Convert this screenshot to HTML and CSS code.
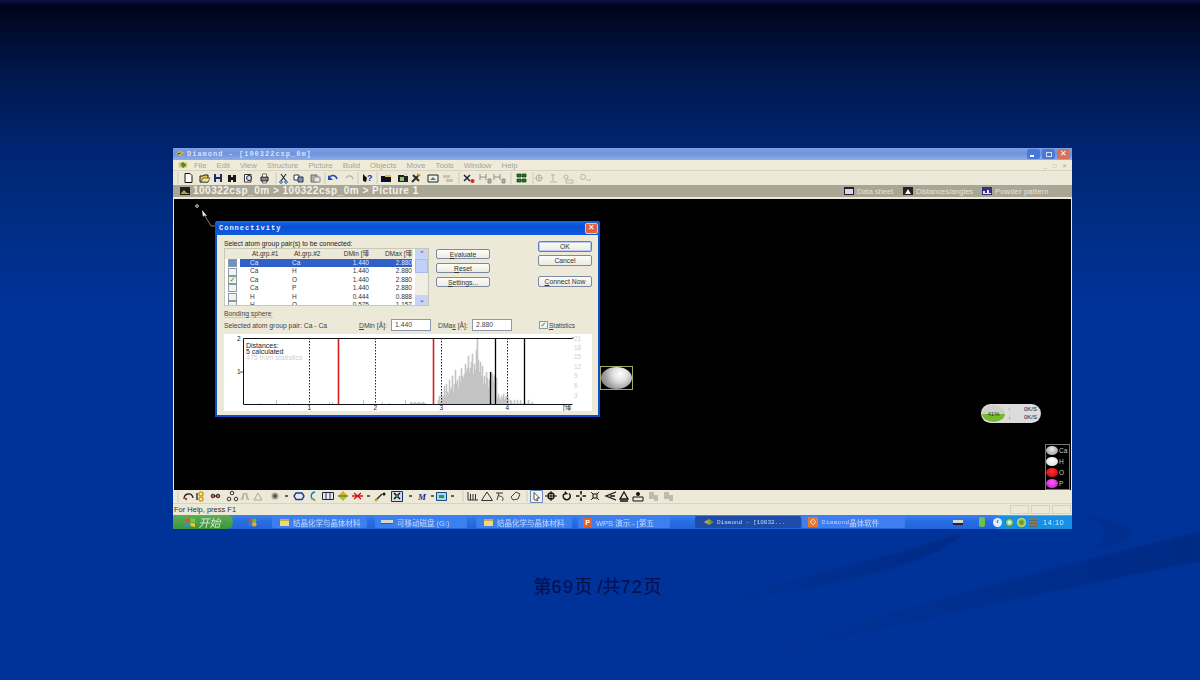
FILE: index.html
```html
<!DOCTYPE html>
<html lang="zh">
<head>
<meta charset="utf-8">
<title>Diamond - Connectivity</title>
<link rel="stylesheet" href="styles.css">
</head>
<body>
<svg class="swoosh" viewBox="0 0 1200 680" aria-hidden="true">
  <defs>
    <linearGradient id="fadeA" x1="1" y1="0" x2="0" y2="0"><stop offset="0" stop-color="#002a84"/><stop offset=".5" stop-color="#002f90"/><stop offset="1" stop-color="#003399"/></linearGradient>
  </defs>
  <path fill="url(#fadeA)" d="M1200 532V561C1060 590 880 625 715 672C850 620 1040 570 1200 532Z"/>
  <path fill="url(#fadeA)" d="M962 534C930 570 800 590 680 612C780 580 880 560 962 534Z"/>
  <path class="sw" d="M1075 515C1110 518 1133 525 1132 533C1130 542 1110 548 1090 551C1110 540 1115 525 1075 515Z"/>
</svg>
<main class="slide">
  <section class="window">
    <header class="titlebar">
      <svg class="ticon" viewBox="0 0 10 8"><path d="M0 4L5 1L10 3L6 4L8 7L4 5Z" fill="#c9c24a"/><path d="M2 4L6 3" stroke="#444"/></svg>
      <span class="mono title-text">Diamond - [100322csp_0m]</span>
      <span class="winbtns">
        <span class="wb wb-blue"><i class="wb-min"></i></span>
        <span class="wb wb-blue"><i class="wb-max"></i></span>
        <span class="wb wb-red">✕</span>
      </span>
    </header>
    <nav class="menubar">
      <svg class="menuicon" viewBox="0 0 12 10"><path d="M1 2H11V8H1Z" fill="#d8c84a"/><path d="M3 4L6 1L10 5L6 9Z" fill="#4c8a3a"/></svg>
      <span>File</span><span>Edit</span><span>View</span><span>Structure</span><span>Picture</span><span>Build</span><span>Objects</span><span>Move</span><span>Tools</span><span>Window</span><span>Help</span>
      <span class="mdi">_ &#9633; ✕</span>
    </nav>
    <div class="toolbar">
      <svg class="strip" viewBox="173 171 899 14" aria-hidden="true">
        <path d="M178 172V184" stroke="#cfcbb8"/>
        <path d="M185 173.500H190L192 175.500V182.500H185Z" fill="#fff" stroke="#111"/>
        <path d="M200 176H203L204 175H208V182H200Z" fill="#e8c850" stroke="#222"/><path d="M203 178H210L208 182H201Z" fill="#f6e48c" stroke="#222" stroke-width=".6"/>
        <path d="M214 174H222V182H214Z" fill="#222b55"/><path d="M216 174H220V177H216ZM216 179H220V182H216Z" fill="#dfe0ee"/>
        <path d="M228 175H231V182H228ZM233 175H236V182H233ZM231 177H233V180H231Z" fill="#17171a"/>
        <path d="M244.500 174.500H251V182H244.500Z" fill="#fff" stroke="#333"/><circle cx="249" cy="178" r="2.500" fill="#cfe4f6" stroke="#222"/>
        <path d="M261 177H268V181H261Z" fill="#8a8a88" stroke="#222"/><path d="M262.500 174H266.500V177H262.500ZM262.500 181H266.500V183H262.500Z" fill="#fff" stroke="#333" stroke-width=".7"/>
        <path d="M276 172V184" stroke="#cfcbb8"/>
        <path d="M281 174L286 181M286 174L281 181" stroke="#222" stroke-width="1.100"/><circle cx="281" cy="182" r="1.300" fill="none" stroke="#26a"/><circle cx="286" cy="182" r="1.300" fill="none" stroke="#26a"/>
        <path d="M294 175H299V180H294Z" fill="#fff" stroke="#334"/><path d="M298 177H303V182H298Z" fill="#7e8ec4" stroke="#334"/>
        <path d="M311 175H317V182H311Z" fill="#b9b39a" stroke="#667"/><path d="M314 177H320V182H314Z" fill="#e6e4dc" stroke="#889"/>
        <path d="M325 172V184" stroke="#cfcbb8"/>
        <path d="M329 178C331 174 336 175 337 179" fill="none" stroke="#2548b8" stroke-width="1.500"/><path d="M328 175V180H333Z" fill="#2548b8"/>
        <path d="M346 178C348 175 352 175 353 179" fill="none" stroke="#b6b4a6" stroke-width="1.200"/>
        <path d="M358 172V184" stroke="#cfcbb8"/>
        <path d="M363 174L367 178L366 182L363 181Z" fill="#111"/><text class="svgq" x="367" y="181">?</text>
        <path d="M377 172V184" stroke="#cfcbb8"/>
        <path d="M381 176H391V182H381Z" fill="#0d0f2a"/><path d="M385 175H391V177H385Z" fill="#e4c23c"/>
        <path d="M398 175H408V182H398Z" fill="#242424"/><path d="M400 177H404V181H400Z" fill="#8cc46c"/><path d="M404 173H408V176H404Z" fill="#ddd"/>
        <path d="M412 182L419 175M413 175L419 181" stroke="#2d2d2d" stroke-width="2"/><path d="M417 173L421 175L418 177Z" fill="#d08f30"/>
        <path d="M428 175H438V182H428Z" fill="#f4f0dc" stroke="#222"/><path d="M430 180L433 177L436 180Z" fill="#4a7cc0"/>
        <path d="M443 175H450V178H443ZM446 179H453V182H446Z" fill="#c6c3b1"/>
        <path d="M459 172V184" stroke="#cfcbb8"/>
        <path d="M464 175L470 181M470 175L464 181" stroke="#222233" stroke-width="1.500"/><circle cx="472.500" cy="181" r="2" fill="#e02418"/>
        <path d="M480 174V180M486 174V180M480 177H486M488 179H491V183H488Z" stroke="#8f9288" fill="#a8b0a0"/>
        <path d="M494 174V180M500 174V180M494 177H500M502 179H505V183H502Z" stroke="#8f9288" fill="#a8b0a0"/>
        <path d="M511 172V184" stroke="#cfcbb8"/>
        <path d="M517 174H521V177H517ZM522 174H526V177H522ZM517 179H521V182H517ZM522 179H526V182H522Z" fill="#1e7a22" stroke="#10360f" stroke-width=".7"/>
        <path d="M533 172V184" stroke="#cfcbb8"/>
        <g fill="none" stroke="#b8b5a2"><circle cx="539" cy="178" r="3"/><path d="M535 178H543M539 174V182"/><path d="M551 175L555 175M553 174V181M550 182H557"/><circle cx="566" cy="177" r="2"/><path d="M566 180H573V183H566Z"/><circle cx="583" cy="177" r="2.500"/><path d="M586 180H591"/></g>
      </svg>
    </div>
    <div class="picbar">
      <svg class="picicon" viewBox="0 0 10 8"><path d="M0 0H10V8H0Z" fill="#1e1e1e"/><path d="M1 6L4 3L7 6H9V7H1Z" fill="#a8a832"/></svg>
      <span class="crumb">100322csp_0m &gt; 100322csp_0m &gt; Picture 1</span>
      <span class="tab tab-data"><svg viewBox="0 0 10 8"><path d="M0 0H10V8H0Z" fill="#222"/><path d="M1 2H9V7H1Z" fill="#d8d4f0"/></svg>Data sheet</span>
      <span class="tab tab-dist"><svg viewBox="0 0 10 8"><path d="M0 0H10V8H0Z" fill="#222"/><path d="M2 7L5 2L8 7Z" fill="#f0f0f0"/></svg>Distances/angles</span>
      <span class="tab tab-powder"><svg viewBox="0 0 10 8"><path d="M0 0H10V8H0Z" fill="#34307a"/><path d="M1 7V4H3V6H5V3H7V6H9V7Z" fill="#e6e4fa"/></svg>Powder pattern</span>
    </div>
    <div class="picsep"></div>
    <div class="canvas">
      <svg class="pointer" viewBox="0 0 42 40" aria-hidden="true">
        <circle cx="23" cy="7" r="1.300" fill="none" stroke="#ddd"/>
        <path d="M28 11L33 17L30 16.500L29 18Z" fill="#f0f0f0"/>
        <path d="M31 17L37 27H42" fill="none" stroke="#8a7468"/>
      </svg>
      <div class="atom"><span class="ball"></span></div>
      <div class="netwidget">
        <span class="gauge">41%</span>
        <span class="rates"><span><b class="up">↑</b>0K/S</span><span><b class="down">↓</b>0K/S</span></span>
      </div>
      <ul class="legend">
        <li><i class="ball-ca"></i>Ca</li>
        <li><i class="ball-h"></i>H</li>
        <li><i class="ball-o"></i>O</li>
        <li><i class="ball-p"></i>P</li>
      </ul>
    </div>
    <div class="toolbar toolbar-b">
      <svg class="strip" viewBox="173 490 899 13" aria-hidden="true">
        <path d="M178 491V502" stroke="#cfcbb8"/>
        <path d="M184 499C184 493 192 492 193 498" fill="none" stroke="#222" stroke-width="1.300"/><circle cx="186" cy="499" r="1.200" fill="#d03020"/>
        <circle cx="201" cy="494" r="2" fill="none" stroke="#d8a010" stroke-width="1.500"/><circle cx="201" cy="499" r="2" fill="none" stroke="#d8a010" stroke-width="1.500"/><path d="M197 493V500" stroke="#222" stroke-width="1.300"/>
        <path d="M211 496H219" stroke="#c02818" stroke-width="1.300"/><circle cx="213" cy="496" r="1.800" fill="none" stroke="#222"/><circle cx="218" cy="496" r="1.800" fill="none" stroke="#222"/>
        <circle cx="232" cy="493" r="1.800" fill="none" stroke="#333"/><circle cx="229" cy="499" r="1.800" fill="none" stroke="#333"/><circle cx="236" cy="499" r="1.800" fill="none" stroke="#333"/>
        <g fill="none" stroke="#aaa998"><path d="M241 500L245 493L249 500M243 493V500M247 493V500"/><path d="M254 500L258 493L262 500Z"/></g>
        <circle cx="275" cy="496" r="3.500" fill="#a8a595"/><circle cx="275" cy="496" r="1.800" fill="#47503e"/>
        <path d="M285 496H288" stroke="#333" stroke-width="1.500"/>
        <path d="M296 493H302L304 496L302 499.500H296L294 496Z" fill="none" stroke="#1838a8" stroke-width="1.400"/>
        <path d="M315 492C310 493 310 499 315 500" fill="none" stroke="#1a7ab8" stroke-width="1.400"/><path d="M311 499L316 501" stroke="#c6b830"/>
        <path d="M322.500 492.500H333.500V499.500H322.500Z" fill="#e8ecf4" stroke="#222"/><path d="M326 492.500V499.500M330 492.500V499.500" stroke="#226"/>
        <path d="M343 491L348 496L343 501L338 496Z" fill="#d6ae20"/><path d="M338 496H348" stroke="#1e8830"/>
        <path d="M354 493L361 499M361 493L354 499M352 496H363" stroke="#d01818" stroke-width="1.400"/>
        <path d="M367 496H370" stroke="#333" stroke-width="1.500"/>
        <path d="M376 500L382 494" stroke="#222" stroke-width="1.300"/><circle cx="376" cy="500" r="1.500" fill="#d8a010"/><circle cx="384" cy="494" r="1.500" fill="#111"/>
        <path d="M391.500 491.500H402.500V501.500H391.500Z" fill="#d6dcec" stroke="#1a2a6a"/><path d="M394 493L400 499M400 493L394 499" stroke="#111" stroke-width="1.600"/><circle cx="397" cy="496" r="1.300" fill="#2a8a2a"/>
        <path d="M409 496H412" stroke="#333" stroke-width="1.500"/>
        <text class="svgm" x="418" y="499.500">M</text><path d="M431 496H434" stroke="#333" stroke-width="1.500"/>
        <path d="M436.500 492.500H446.500V500.500H436.500Z" fill="#a8d8e0" stroke="#1a4a8a"/><path d="M439 495H444V498H439Z" fill="#2a9a50"/>
        <path d="M451 496H454" stroke="#333" stroke-width="1.500"/>
        <path d="M463 491V502" stroke="#cfcbb8"/>
        <path d="M468 492V500H478M470.500 494V500M473 494V500M475.500 494V500" fill="none" stroke="#333"/>
        <path d="M487 492L492.500 500.500H481.500Z" fill="none" stroke="#333"/>
        <path d="M496 493H503M499 493L497 500M499 496C503 496 504 499 502 501" fill="none" stroke="#333"/>
        <path d="M511 497L516 492L520 494L518 499L513 500Z" fill="none" stroke="#444"/>
        <path d="M527 491V502" stroke="#cfcbb8"/>
        <path d="M530.500 490.500H542.500V502.500H530.500Z" fill="#f6f4e8" stroke="#6888c0"/><path d="M534 492.500L539.500 498L536.800 498.200L537.800 500.800L534 499.500Z" fill="#fff" stroke="#222" stroke-width=".8"/>
        <circle cx="551" cy="496" r="3" fill="none" stroke="#111" stroke-width="1.400"/><path d="M545 496H557M551 491V501" stroke="#111"/>
        <path d="M569 493.500A3.500 3.500 0 1 1 564 494" fill="none" stroke="#111" stroke-width="1.500"/><path d="M565 491L568 494L564 495Z" fill="#111"/>
        <path d="M581 491V501M576 496H586" stroke="#111" stroke-width="1.600"/><circle cx="581" cy="496" r="1.700" fill="#e4e0cc"/>
        <path d="M591 492L599 500M599 492L591 500" stroke="#222"/><path d="M593 494H597V498H593Z" fill="#e4e0cc" stroke="#111"/>
        <path d="M616 492L606 496L616 500M610 496H615" fill="none" stroke="#111" stroke-width="1.300"/>
        <path d="M624 492L620 499H628ZM620 501H628" fill="none" stroke="#111" stroke-width="1.300"/>
        <circle cx="638" cy="494" r="2" fill="#111"/><path d="M633 497H643V501H633Z" fill="none" stroke="#111"/>
        <path d="M649 492H654V499H649ZM654 495H658V501H654Z" fill="#bdbbab"/>
        <path d="M664 492H669V499H664ZM669 495H673V501H669Z" fill="#bdbbab"/>
      </svg>
    </div>
    <div class="status">
      <span class="status-text">For Help, press F1</span>
      <span class="pane"></span><span class="pane"></span><span class="pane"></span>
    </div>
    <footer class="taskbar">
      <span class="start"><svg viewBox="0 0 10 10"><path d="M0 1L4 0V4L0 5Z" fill="#e8542a"/><path d="M5 0L10 1V5L5 4Z" fill="#7cc83c"/><path d="M0 6L4 5V9L0 10Z" fill="#3c88e0"/><path d="M5 5L10 6V10L5 9Z" fill="#f0c828"/></svg><em>开始</em></span>
      <span class="quick"><svg viewBox="0 0 10 10"><circle cx="3" cy="3" r="2.500" fill="#d04c30"/><circle cx="7" cy="3" r="2.500" fill="#68b848"/><circle cx="3" cy="7" r="2.500" fill="#3c78d8"/><circle cx="7" cy="7" r="2.500" fill="#e0b030"/></svg></span>
      <span class="task t1"><i class="folder"></i>结晶化学与晶体材料</span>
      <span class="task t2"><i class="drive"></i>可移动磁盘 (G:)</span>
      <span class="task t3"><i class="folder"></i>结晶化学与晶体材料</span>
      <span class="task t4"><i class="wps">P</i>WPS 演示 - [第五</span>
      <span class="task t5 active"><i class="dia"></i><span class="mono">Diamond - [10032...</span></span>
      <span class="task t6"><i class="orange">◇</i><span class="mono">Diamond</span>晶体软件</span>
      <span class="tray-left">
        <i class="tl-a"></i><i class="tl-b"></i>
      </span>
      <span class="tray">
        <i class="arrow-round">‹</i><i class="tr-g"></i><i class="tr-s"></i><i class="tr-n"></i>
        <span class="clock">14:10</span>
      </span>
    </footer>

    <div class="dialog">
      <header class="dlg-title">
        <span class="mono dlg-name">Connectivity</span>
        <span class="wb wb-red dlg-close">✕</span>
      </header>
      <div class="dlg-body">
        <div class="dlg-top">
          <div class="listcol">
            <div class="lbl">Select atom group pair(s) to be connected:</div>
            <div class="list">
              <div class="rows">
                <div class="row head"><span></span><span class="c1">At.grp.#1</span><span class="c2">At.grp.#2</span><span class="num">DMin [琫</span><span class="num">DMax [琫</span></div>
                <div class="row sel"><span class="cell-check"><i class="cb cb-fill"></i></span><span class="c1 sel-on">Ca</span><span class="c2 sel-on">Ca</span><span class="num sel-on">1.440</span><span class="num sel-on">2.880</span></div>
                <div class="row"><span class="cell-check"><i class="cb"></i></span><span class="c1">Ca</span><span class="c2">H</span><span class="num">1.440</span><span class="num">2.880</span></div>
                <div class="row"><span class="cell-check"><i class="cb cb-on">✓</i></span><span class="c1">Ca</span><span class="c2">O</span><span class="num">1.440</span><span class="num">2.880</span></div>
                <div class="row"><span class="cell-check"><i class="cb"></i></span><span class="c1">Ca</span><span class="c2">P</span><span class="num">1.440</span><span class="num">2.880</span></div>
                <div class="row"><span class="cell-check"><i class="cb"></i></span><span class="c1">H</span><span class="c2">H</span><span class="num">0.444</span><span class="num">0.888</span></div>
                <div class="row"><span class="cell-check"><i class="cb"></i></span><span class="c1">H</span><span class="c2">O</span><span class="num">0.575</span><span class="num">1.157</span></div>
              </div>
              <div class="scroll">
                <span class="sb-btn">⌃</span><span class="sb-thumb"></span><span class="sb-gap"></span><span class="sb-btn">⌄</span>
              </div>
            </div>
          </div>
          <div class="btncol b1">
            <span class="btn"><u>E</u>valuate</span>
            <span class="btn"><u>R</u>eset</span>
            <span class="btn"><u>S</u>ettings...</span>
          </div>
          <div class="btncol b2">
            <span class="btn big default">OK</span>
            <span class="btn big">Cancel</span>
            <span class="btn big connect"><u>C</u>onnect Now</span>
          </div>
        </div>
        <div class="bond"><span>Bonding sphere</span></div>
        <div class="bondrow">
          <span class="sel-pair">Selected atom group pair: Ca - Ca</span>
          <span class="fl fl-min"><u>D</u>Min [Å]:</span><span class="input">1.440</span>
          <span class="fl fl-max">DMa<u>x</u> [Å]:</span><span class="input">2.880</span>
          <span class="stat"><i class="cb cb-on">✓</i><span><u>S</u>tatistics</span></span>
        </div>
        <svg class="chart" viewBox="224 334 368 77" role="img" aria-label="Distance histogram">
          <rect x="224" y="334" width="368" height="77" fill="#fff"/>
          <path class="bars" d="M438 404V400h1V396h1V402h1V392h1V398h1V396h1V386h1V396h1V384h1V392h1V394h1V380h1V390h1V388h1V376h1V392h1V384h1V370h1V384h1V380h1V388h1V376h1V382h1V368h1V376h1V378h1V374h1V364h1V372h1V368h1V356h1V372h1V368h1V362h1V354h1V374h1V364h1V370h1V350h1V338h1V360h1V372h1V362h1V376h1V366h1V384h1V376h1V384h1V372h1V378h1V388h1V380h1V388h1V372h1V374h1V382h1V376h1V388h1V378h1V398h1V394h1V398h1V400h1V396h1V398h1V394h1V400h1V397h1V396h1V393h1V399h1V404h1V400h1V401h1V404h2V400h1V404h2V400h1V404h2V400h1V404h3V402h1V404h3V400h1V404h3V402h1V404Z"/>
          <path class="bars thin" d="M259 404V403h1V404ZM276 404V400h1V404ZM288 404V403h1V404ZM329 404V402h1V404ZM332 404V402h1V404ZM363 404V400h1V404ZM382 404V402h1V404ZM389 404V403h1V404ZM405 404V400h1V404ZM410 404V402h2V403h2V402h2V403h2V402h2V403h2V402h2V403h2V404Z"/>
          <g class="dots"><path d="M309.500 338V404M375.500 338V404M441.500 338V404M507.500 338V404"/></g>
          <path class="red" d="M338.500 338V404M433.500 338V404"/>
          <path class="blk" d="M490.500 372V404M495.500 338V404M524.500 338V404"/>
          <path class="axis" d="M243.500 338.500H572.500M243.500 338.500V404.500H572.500"/>
          <path class="tick" d="M240 372H243M572 338H574"/>
          <text class="t" x="237" y="341">2</text><text class="t" x="237" y="374">1</text>
          <text class="t" x="307.500" y="410">1</text><text class="t" x="373.500" y="410">2</text><text class="t" x="439.500" y="410">3</text><text class="t" x="505.500" y="410">4</text><text class="t" x="563" y="410">[琫</text>
          <text class="t lg" x="246" y="347.500">Distances:</text><text class="t lg" x="246" y="353.500">5 calculated</text><text class="t lg gr" x="246" y="360">475 from statistics</text>
          <g class="gr t"><text x="574" y="341">21</text><text x="574" y="350">18</text><text x="574" y="359">15</text><text x="574" y="369">12</text><text x="574" y="378">9</text><text x="574" y="388">6</text><text x="574" y="398">3</text></g>
        </svg>
      </div>
    </div>
  </section>
  <p class="pager">第<span class="dg">69</span>页 /共<span class="dg">72</span>页</p>
</main>
</body>
</html>
```

FILE: styles.css
```css
* { box-sizing: border-box; }
html, body { margin: 0; height: 680px; overflow: hidden; }
body {
  position: relative;
  width: 1200px;
  font-family: "Liberation Sans", "Noto Sans CJK SC", sans-serif;
  background: linear-gradient(180deg, #0a1244 0, #00041a 6px, #000a2a 25px, #00184c 75px, #002470 145px, #002d84 220px, #003399 310px, #003399 680px);
}
.swoosh { position: absolute; inset: 0; width: 1200px; height: 680px; filter: blur(1.5px); }
.sw { fill: #002f90; }
.slide { position: relative; display: flex; flex-direction: column; padding-top: 148px; }
.mono { font-family: "Liberation Mono", "Noto Sans CJK SC", monospace; font-weight: 700; letter-spacing: 1px; }

/* window */
.window {
  position: relative;
  margin-left: 173px;
  width: 899px;
  height: 381px;
  display: flex;
  flex-direction: column;
  background: #ece9d8;
  filter: blur(.5px);
}
.titlebar {
  height: 12px;
  display: flex;
  align-items: center;
  padding: 0 2px 0 2px;
  background: linear-gradient(180deg, #7fa0e2, #6f92dc 50%, #8eade8);
}
.ticon { width: 10px; height: 8px; margin-right: 2px; }
.title-text { font-size: 7px; color: #d8e2fc; }
.winbtns { margin-left: auto; display: flex; gap: 2px; }
.wb { width: 13px; height: 10px; border-radius: 2px; display: flex; align-items: center; justify-content: center; color: #fff; font-size: 8px; position: relative; line-height: 1; }
.wb-blue { background: #4a78d8; }
.wb-red { background: #d8705c; }
.wb-min { width: 4px; height: 2px; background: #fff; position: absolute; left: 3px; bottom: 2px; }
.wb-max { width: 6px; height: 5px; border: 1px solid #dde; }

.menubar {
  height: 11px;
  display: flex;
  align-items: center;
  gap: 10px;
  padding-left: 21px;
  font-size: 7.8px;
  color: #a5a396;
  background: #efebd9;
  border-bottom: 1px solid #dcd2c4;
  position: relative;
}
.menuicon { position: absolute; left: 5px; top: 0; width: 10px; height: 10px; }
.mdi { margin-left: auto; margin-right: 3px; font-size: 6px; color: #b0aea2; letter-spacing: 2px; }
.toolbar { height: 14px; background: #ece9d8; flex: none; }
.toolbar-b { height: 13px; }
.strip { display: block; width: 899px; height: 100%; }
.svgq { font: 700 9px "Liberation Sans", sans-serif; fill: #1a2a9a; }
.svgm { font: italic 700 9px "Liberation Serif", serif; fill: #1a2a9a; }

.picbar {
  height: 12px;
  display: flex;
  align-items: center;
  padding: 0 19px 0 7px;
  background: #a9a696;
  color: #f2f2ea;
  font-size: 8px;
}
.picicon { width: 10px; height: 8px; margin-right: 3px; }
.crumb { font-size: 10px; letter-spacing: .5px; line-height: 12px; font-weight: 700; white-space: nowrap; }
.tab { display: flex; align-items: center; gap: 3px; font-size: 7.5px; color: #e4e3da; white-space: nowrap; }
.tab svg { width: 10px; height: 8px; }
.tab-data { margin-left: auto; width: 59px; }
.tab-dist { width: 79px; }
.tab-powder { width: 71px; letter-spacing: .2px; }
.picsep { height: 2px; background: #ece9d8; }

/* canvas */
.canvas { flex: 1; position: relative; background: #000; margin: 0 1px; }
.pointer { position: absolute; left: 0; top: 0; width: 42px; height: 40px; }
.atom { position: absolute; left: 426px; top: 167px; width: 33px; height: 24px; border: 1px solid #a6a860; display: flex; }
.ball { flex: 1; border-radius: 50%; background: radial-gradient(circle at 62% 32%, #fff, #e0e0e0 30%, #a0a0a0 62%, #6e6e6e); }
.netwidget {
  position: absolute;
  left: 807px;
  top: 205px;
  width: 60px;
  height: 19px;
  border-radius: 10px;
  background: #dcdcdc;
  display: flex;
  align-items: center;
  padding: 0 4px 0 1px;
  font-size: 6px;
  color: #222;
}
.gauge { width: 23px; height: 17px; border-radius: 50%; display: flex; align-items: center; justify-content: center; background: linear-gradient(180deg, #cfcfc8 55%, #76b82e 55%); color: #333; }
.rates { flex: 1; display: flex; flex-direction: column; gap: 1px; }
.rates span { display: flex; justify-content: space-between; padding-left: 3px; line-height: 7px; }
.up { color: #e07020; }
.down { color: #408030; }
.legend {
  position: absolute;
  right: 1px;
  bottom: 0;
  width: 25px;
  height: 46px;
  margin: 0;
  padding: 0;
  list-style: none;
  display: flex;
  flex-direction: column;
  justify-content: space-around;
  background: #000;
  border: 1px solid #77776e;
  color: #c8c8c8;
  font-size: 6.5px;
}
.legend li { display: flex; align-items: center; gap: 1px; height: 11px; }
.legend i { width: 12px; height: 9px; border-radius: 50%; display: block; }
.ball-ca { background: radial-gradient(circle at 50% 35%, #eee, #8c8c8c); }
.ball-h { background: radial-gradient(circle at 50% 35%, #fff, #d8d8d8); }
.ball-o { background: radial-gradient(circle at 50% 35%, #ff3030, #c80000); }
.ball-p { background: radial-gradient(circle at 50% 35%, #ff60ff, #c010c0); }

/* status */
.status {
  height: 12px;
  display: flex;
  align-items: center;
  gap: 2px;
  padding-right: 1px;
  background: #ece9d8;
  border-top: 1px solid #d8d4c0;
  font-size: 7.5px;
  color: #333;
}
.status-text { margin-left: 1px; margin-right: auto; }
.pane { width: 19px; height: 9px; border: 1px solid #d6d2bc; }

/* taskbar */
.taskbar {
  height: 14px;
  flex: none;
  display: flex;
  align-items: stretch;
  background: linear-gradient(180deg, #3a84f0, #2a6ee4 40%, #2264d8);
  font-size: 7.5px;
  color: #c6d6fa;
  white-space: nowrap;
}
.start {
  width: 60px;
  display: flex;
  align-items: center;
  justify-content: center;
  gap: 4px;
  background: linear-gradient(180deg, #5cad58, #3b963c);
  border-radius: 0 6px 6px 0;
  color: #d4e8d0;
  font-size: 11px;
}
.start svg { width: 9px; height: 9px; }
.start em { font-family: "Noto Sans CJK SC", sans-serif; line-height: 1; }
.quick { width: 39px; display: flex; align-items: center; padding-left: 15px; }
.quick svg { width: 9px; height: 9px; }
.task { display: flex; align-items: center; gap: 4px; padding-left: 6px; margin: 1px 0; background: #3c80f0; border-radius: 2px; overflow: hidden; }
.t1 { width: 95px; padding-left: 8px; }
.t2 { width: 92px; margin-left: 8px; }
.t3 { width: 96px; margin-left: 9px; padding-left: 8px; }
.t4 { width: 92px; margin-left: 6px; padding-left: 5px; gap: 4px; }
.t5 { width: 106px; margin-left: 25px; padding-left: 9px; gap: 3px; }
.t6 { width: 103px; margin-left: 1px; gap: 0; padding-left: 6px; background: #3f7ef0; }
.active { background: #1c4ca8; }
.task .mono { font-size: 6px; letter-spacing: 0; font-weight: 400; }
.t6 .mono { margin-left: 4px; letter-spacing: .3px; }
.folder { width: 9px; height: 7px; background: #f0d878; border-top: 2px solid #c8a848; flex: none; }
.drive { width: 12px; height: 4px; background: #d8d8d0; border-bottom: 1px solid #555; flex: none; }
.wps { width: 9px; height: 9px; background: #e86020; color: #fff; font: 700 7px/9px "Liberation Sans", sans-serif; text-align: center; flex: none; }
.dia { width: 10px; height: 6px; background: linear-gradient(90deg, #d8c040, #487848); clip-path: polygon(0 50%, 50% 0, 100% 50%, 50% 100%); flex: none; }
.orange { width: 10px; height: 10px; background: #e8762c; color: #fff; font: 700 8px/10px "DejaVu Sans", sans-serif; text-align: center; flex: none; font-style: normal; }
.tray-left { width: 92px; position: relative; display: flex; align-items: center; }
.tl-a { width: 10px; height: 5px; margin-left: 48px; background: #d8d8d0; border-bottom: 2px solid #223; }
.tl-b { width: 6px; height: 10px; margin-left: 16px; background: #6cc050; border-radius: 2px; }
.tray { flex: 1; display: flex; align-items: center; gap: 3px; background: #1590e8; padding-left: 0; border-top: 1px solid #4aa8f0; position: relative; }
.tray i { display: block; width: 9px; height: 9px; border-radius: 50%; font-style: normal; flex: none; }
.tray .arrow-round { margin-left: -4px; background: #dfeeff; color: #1a5ac0; font: 700 8px/8px "Liberation Sans", sans-serif; text-align: center; }
.tr-g { background: radial-gradient(circle, #d8f0d0 20%, #2a8a48 70%); }
.tr-s { background: radial-gradient(circle, #60a030 25%, #e8e060 70%); }
.tray .tr-n { border-radius: 0; background: repeating-linear-gradient(180deg, #807a68 0 2px, #5c6a6c 2px 3px); }
.clock { margin-left: 2px; font-size: 7.5px; letter-spacing: .5px; color: #c8e8ff; }

/* dialog */
.dialog {
  position: absolute;
  left: 42px;
  top: 73px;
  width: 385px;
  height: 196px;
  display: flex;
  flex-direction: column;
  background: #ece9d8;
  border: 2px solid #0a4fd0;
  border-top: 0;
  border-radius: 3px 3px 0 0;
  color: #222;
  font-size: 6.8px;
}
.dlg-title {
  height: 14px;
  margin: 0 -2px;
  flex: none;
  display: flex;
  align-items: center;
  padding: 0 2px 0 4px;
  background: linear-gradient(180deg, #1a68e4, #0a50d4 40%, #0c5ce0);
  border-radius: 3px 3px 0 0;
}
.dlg-name { font-size: 7px; color: #eaf0ff; }
.dlg-close { margin-left: auto; width: 13px; height: 11px; background: #e06040; border: 1px solid #f0c0b0; }
.dlg-body { flex: 1; padding: 5px 0 0 7px; }
.dlg-top { display: flex; height: 66px; }
.listcol { width: 205px; }
.lbl { line-height: 8px; height: 8px; white-space: nowrap; }
.list { height: 58px; display: flex; background: #fff; border: 1px solid #c8c8b8; overflow: hidden; }
.rows { width: 188px; flex: none; }
.row { display: grid; grid-template-columns: 15px 42px 44px 43px 43px; height: 8.4px; line-height: 8.4px; font-size: 6.5px; color: #333; white-space: nowrap; }
.head { height: 10px; line-height: 10px; background: #ece9d8; color: #333; }
.head .c1 { padding-left: 12px; }
.head .c2 { padding-left: 12px; }
.c1, .c2 { padding-left: 10px; }
.num { text-align: right; }
.sel-on { background: #3160c8; color: #dfe8ff; }
.cell-check { display: flex; align-items: center; justify-content: center; }
.cb { display: block; width: 9px; height: 8px; border: 1px solid #8a9aa8; background: #f4f4ee; flex: none; font: 700 7px/7px "DejaVu Sans", sans-serif; color: #208a30; text-align: center; font-style: normal; }
.cb-fill { background: #7090c8; }
.scroll { flex: 1; margin-left: 2px; display: flex; flex-direction: column; background: #f0eee4; }
.sb-btn { height: 10px; background: #c6d4f6; color: #2a3c80; font-size: 7px; line-height: 9px; text-align: center; }
.sb-thumb { height: 14px; background: #c0d0f8; border: 1px solid #a8bcec; }
.sb-gap { flex: 1; }
.btncol { display: flex; flex-direction: column; width: 54px; flex: none; }
.b1 { margin-left: 7px; padding-top: 9px; gap: 4px; }
.b2 { margin-left: 48px; padding-top: 1px; gap: 3px; }
.btn { height: 10px; line-height: 9px; border: 1px solid #7d89a2; border-radius: 2px; background: linear-gradient(180deg, #fdfdf8, #ecebe2); text-align: center; color: #333; white-space: nowrap; }
.big { height: 11px; line-height: 10px; }
.default { border: 1px solid #5c7cc8; box-shadow: inset 0 0 0 1px #b8ccf4; }
.connect { margin-top: 7px; }
.bond { margin-top: 4px; height: 8px; line-height: 7px; color: #444; }
.bond span { display: inline-block; border-bottom: 1px solid #cfcbb6; padding-right: 1px; }
.bondrow { display: flex; align-items: center; height: 12px; margin-top: 1px; white-space: nowrap; color: #444; }
.sel-pair { width: 135px; }
.fl { width: 32px; }
.fl-max { width: 34px; margin-left: 7px; }
.input { width: 40px; height: 12px; line-height: 10px; border: 1px solid #8a99ad; background: #fff; padding-left: 3px; color: #444; }
.stat { display: flex; align-items: center; gap: 1px; margin-left: 27px; font-size: 6.5px; }
.chart { display: block; width: 368px; height: 77px; margin-top: 3px; }
.bars { fill: #c3c3c3; stroke: #c3c3c3; stroke-width: .6; }
.bars.thin { stroke: none; }
.dots path { stroke: #222; stroke-dasharray: 1.500 1.500; fill: none; }
.red { stroke: #d81e1e; stroke-width: 1.600; fill: none; }
.blk { stroke: #000; stroke-width: 1.300; fill: none; }
.axis { stroke: #111; fill: none; }
.tick { stroke: #555; fill: none; }
.t { font: 6.5px "Liberation Sans", "Noto Sans CJK SC", sans-serif; fill: #222; }
.lg { font-size: 7px; }
.gr, .gr text { fill: #cfcfcb; }

.pager {
  margin: 48px 0 0;
  height: 20px;
  line-height: 20px;
  text-align: center;
  padding-right: 5px;
  font-size: 18px;
  color: #061050;
  -webkit-text-stroke: .2px #061050;
}
.dg { letter-spacing: 1.500px; }
```
